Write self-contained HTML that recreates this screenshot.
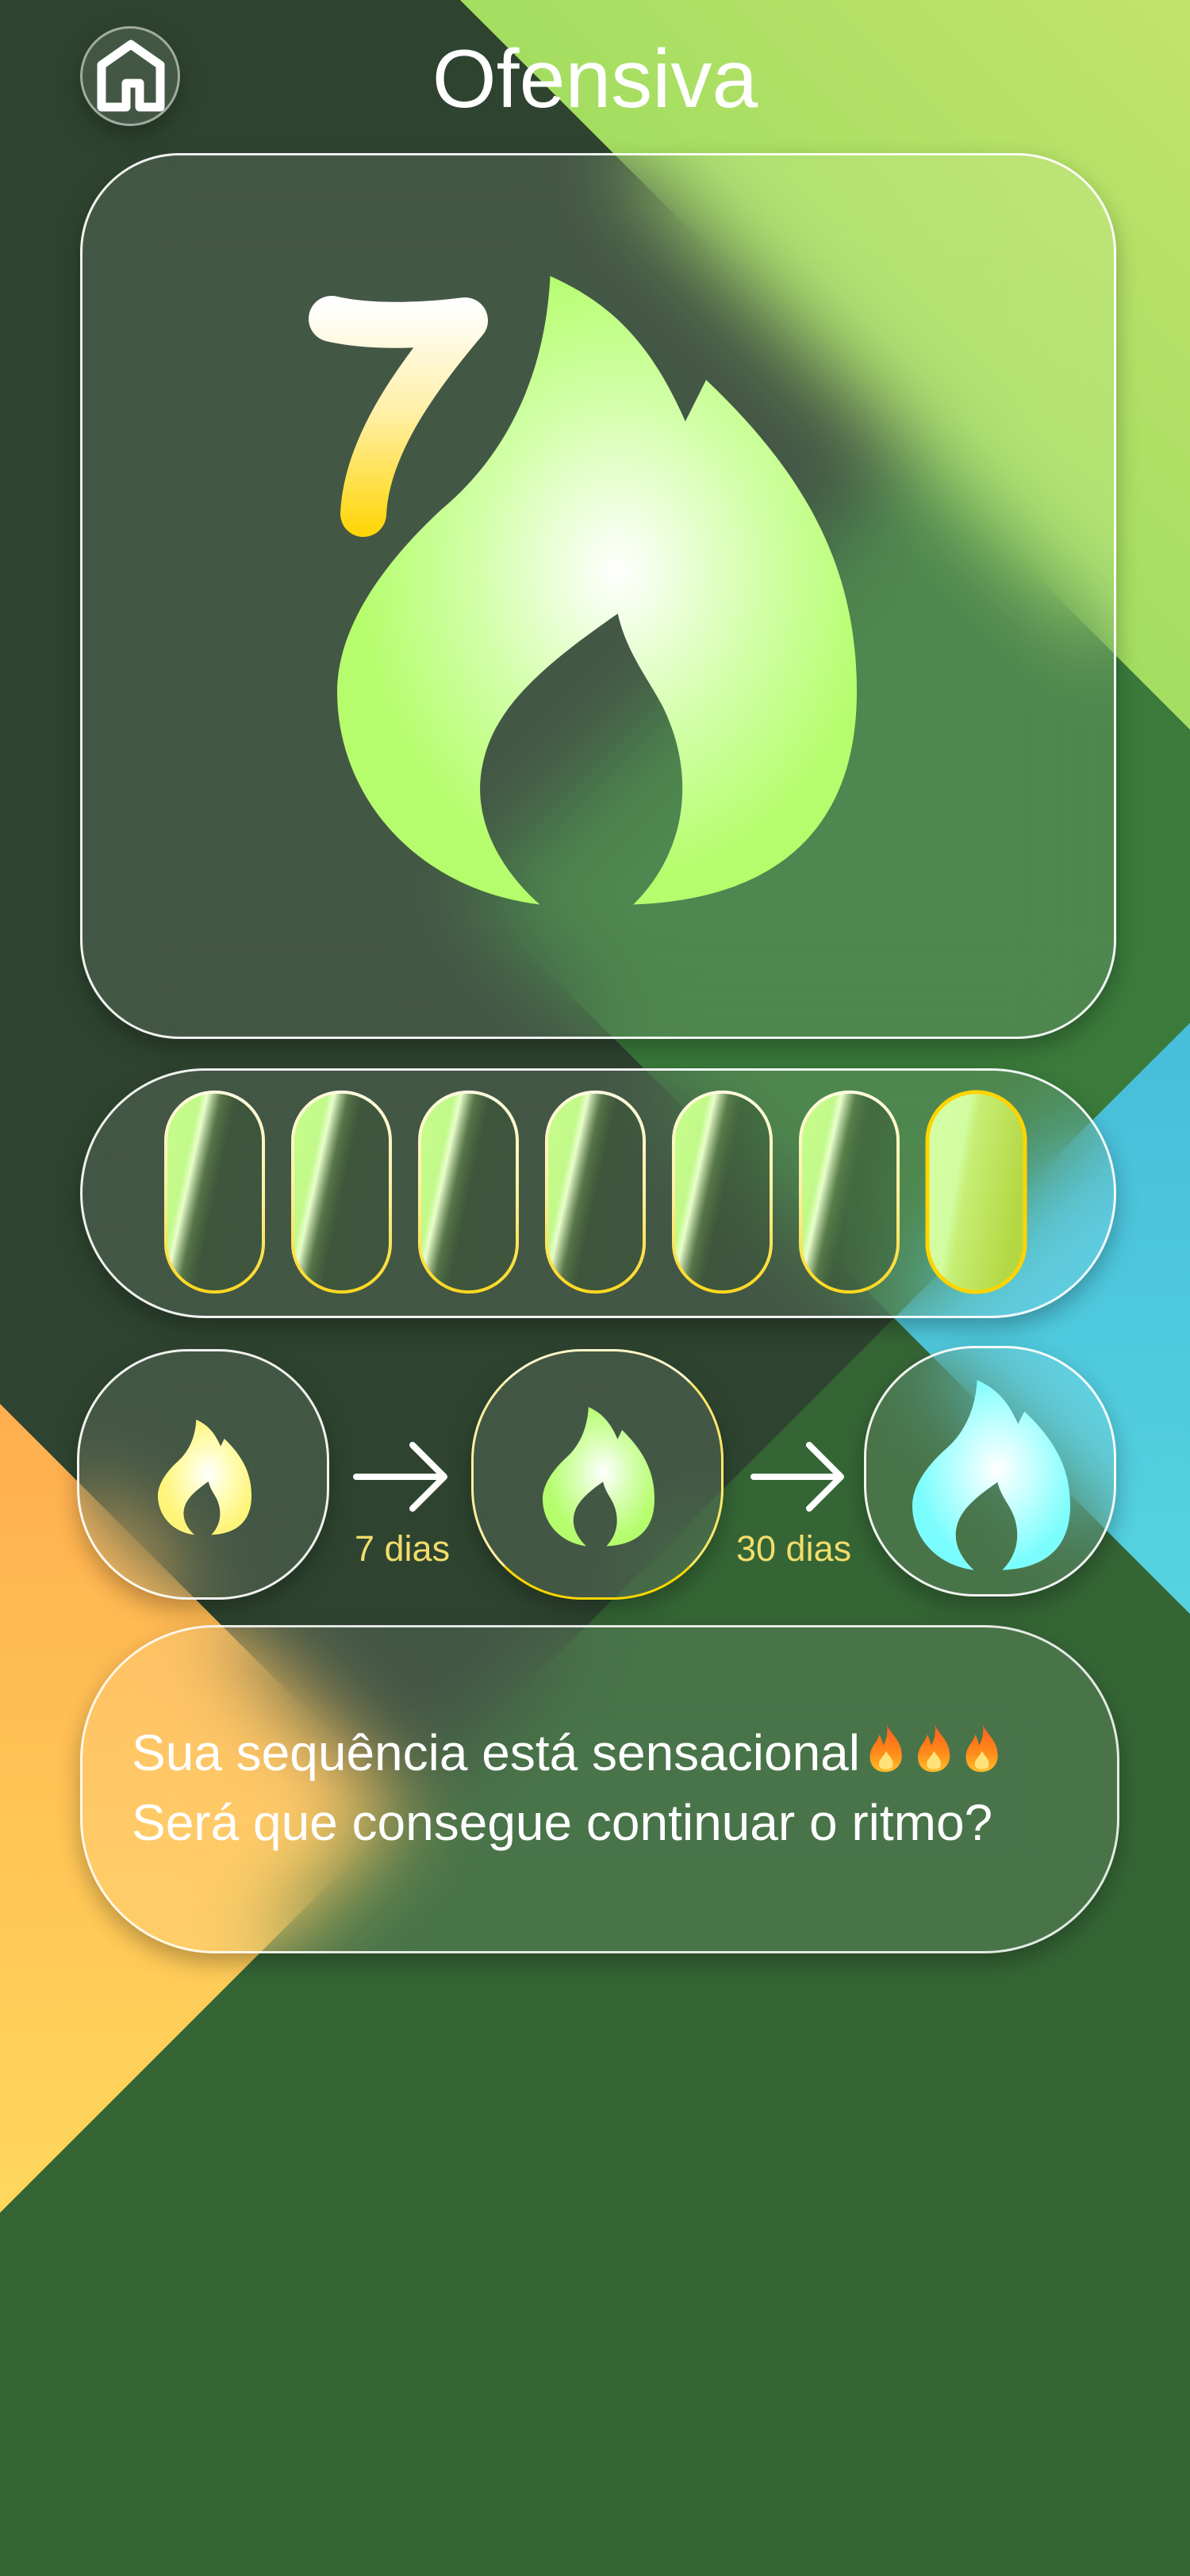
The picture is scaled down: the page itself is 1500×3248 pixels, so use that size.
<!DOCTYPE html>
<html><head><meta charset="utf-8">
<style>
html,body{margin:0;padding:0;}
body{width:1500px;height:3248px;overflow:hidden;position:relative;font-family:"Liberation Sans",sans-serif;background:#356535;}
.bg{position:absolute;left:0;top:0;}
.glass{position:absolute;box-sizing:border-box;border:3px solid rgba(255,255,255,0.92);background:rgba(255,255,255,0.1);backdrop-filter:blur(55px);-webkit-backdrop-filter:blur(55px);box-shadow:0 12px 28px rgba(0,0,0,0.28);}
.abs{position:absolute;}
.title{position:absolute;left:0;width:1500px;text-align:center;top:48px;font-size:104px;color:#fff;line-height:1;}
.lbl{position:absolute;font-size:45px;color:#f2dd6b;line-height:1;}
.msg{position:absolute;left:166px;font-size:64px;color:#fff;line-height:1;white-space:nowrap;}
.msg svg{vertical-align:-6px;}
</style></head><body>
<svg class="bg" width="1500" height="3248" viewBox="0 0 1500 3248">
<defs>
<linearGradient id="lg" x1="0" y1="1" x2="1" y2="0"><stop offset="0" stop-color="#86d957"/><stop offset="1" stop-color="#c2e36b"/></linearGradient>
<linearGradient id="cy" x1="0" y1="0" x2="0" y2="1"><stop offset="0" stop-color="#43b8d8"/><stop offset="1" stop-color="#5fe0e4"/></linearGradient>
<linearGradient id="or" x1="0" y1="0" x2="0" y2="1"><stop offset="0" stop-color="#ffae4f"/><stop offset="1" stop-color="#ffd85c"/></linearGradient>
</defs>
<rect width="1500" height="3248" fill="#356535"/>
<polygon points="1150,570 1685,1105 1127,1662 592,1128" fill="#3a7a3b"/>
<polygon points="1127,1662 1685,1105 2500,1920 1940,2475" fill="url(#cy)"/>
<polygon points="0,0 580,0 1150,570 592,1128 1127,1662 0,2790" fill="#2e4430"/>
<polygon points="580,0 1500,0 1500,920" fill="url(#lg)"/>
<polygon points="0,1770 510,2280 0,2790" fill="url(#or)"/>
</svg>

<!-- home -->
<div class="glass" style="left:101px;top:33px;width:126px;height:126px;border-radius:50%;border-color:rgba(255,255,255,0.5);"></div>
<svg class="abs" style="left:0;top:0" width="260" height="170"><path d="M128,135 L128,82 L165,56 L202,82 L202,135 L176,135 L176,105 L159,105 L159,135 Z" fill="none" stroke="#fff" stroke-width="11" stroke-linejoin="round"/></svg>

<div class="title">Ofensiva</div>

<!-- card 1 -->
<div class="glass" style="left:101px;top:193px;width:1306px;height:1117px;border-radius:125px;"></div>
<svg class="abs" style="left:0;top:0" width="1500" height="1320">
<defs>
<radialGradient id="fg" cx="0.54" cy="0.47" r="0.5"><stop offset="0" stop-color="#ffffff"/><stop offset="0.55" stop-color="#d2ffa8"/><stop offset="1" stop-color="#b5fd6c"/></radialGradient>
<linearGradient id="sv" gradientUnits="userSpaceOnUse" x1="0" y1="385" x2="0" y2="680"><stop offset="0" stop-color="#ffffff"/><stop offset="0.45" stop-color="#fff0a8"/><stop offset="1" stop-color="#ffd400"/></linearGradient>
</defs>
<g transform="translate(425,348) scale(6.55)">
<path d="M41,0 C40,20 32,35 20,45 C6,58 0,70 0,80 C0,100 15,118 39,121 C30,113 26,103 28,94 C30,84 38,76 54,65 C56,74 62,80 64,86 C68,96 68,110 57,121 C85,120 100,106 100,80 C100,56 90,38 71,20 L67,28 C60,12 52,5 41,0 Z" fill="url(#fg)"/>
</g>
<path d="M418,402 C470,414 540,410 586,404 C530,470 462,560 458,648" fill="none" stroke="url(#sv)" stroke-width="58" stroke-linecap="round" stroke-linejoin="round"/>
</svg>

<!-- card 2 pills -->
<div class="glass" style="left:101px;top:1347px;width:1306px;height:315px;border-radius:158px;"></div>
<svg class="abs" style="left:0;top:1340px" width="1500" height="340">
<defs>
<linearGradient id="pf" x1="0" y1="0" x2="1" y2="0.45"><stop offset="0" stop-color="#c6fd8a"/><stop offset="0.3" stop-color="#c2f98a"/><stop offset="0.36" stop-color="#e8ffcc"/><stop offset="0.48" stop-color="#5c7d48" stop-opacity="0.8"/><stop offset="0.62" stop-color="#3a5535" stop-opacity="0.55"/><stop offset="1" stop-color="#3a5535" stop-opacity="0.4"/></linearGradient>
<linearGradient id="pb" x1="0" y1="0" x2="0" y2="1"><stop offset="0" stop-color="#fffbe0"/><stop offset="0.5" stop-color="#fff0a0"/><stop offset="1" stop-color="#ffd81f"/></linearGradient>
<linearGradient id="pl" x1="0" y1="0" x2="1" y2="0.35"><stop offset="0" stop-color="#d6ffa6"/><stop offset="0.4" stop-color="#d2fca0"/><stop offset="0.5" stop-color="#c6ee74"/><stop offset="1" stop-color="#b4d844"/></linearGradient>
</defs>
<g stroke="url(#pb)" stroke-width="4" fill="url(#pf)">
<rect x="209" y="37" width="123" height="252" rx="61"/>
<rect x="369" y="37" width="123" height="252" rx="61"/>
<rect x="529" y="37" width="123" height="252" rx="61"/>
<rect x="689" y="37" width="123" height="252" rx="61"/>
<rect x="849" y="37" width="123" height="252" rx="61"/>
<rect x="1009" y="37" width="123" height="252" rx="61"/>
</g>
<rect x="1169" y="37" width="123" height="252" rx="61" fill="url(#pl)" stroke="#ffd400" stroke-width="5"/>
</svg>

<!-- row 3 -->
<div class="glass" style="left:97px;top:1701px;width:318px;height:316px;border-radius:140px;"></div>
<div class="glass" style="left:594px;top:1701px;width:318px;height:316px;border-radius:140px;border-color:#fff6c8 #ffe86a #ffd700 #fff0a0;"></div>
<div class="glass" style="left:1089px;top:1697px;width:318px;height:316px;border-radius:140px;"></div>
<svg class="abs" style="left:0;top:1690px" width="1500" height="340">
<defs>
<radialGradient id="fy" cx="0.54" cy="0.47" r="0.5"><stop offset="0" stop-color="#ffffff"/><stop offset="0.55" stop-color="#fffcb0"/><stop offset="1" stop-color="#fff47a"/></radialGradient>
<radialGradient id="fc" cx="0.54" cy="0.47" r="0.5"><stop offset="0" stop-color="#ffffff"/><stop offset="0.55" stop-color="#b8ffff"/><stop offset="1" stop-color="#7cfdfd"/></radialGradient>
</defs>
<g transform="translate(199,100) scale(1.18,1.2)"><path d="M41,0 C40,20 32,35 20,45 C6,58 0,70 0,80 C0,100 15,118 39,121 C30,113 26,103 28,94 C30,84 38,76 54,65 C56,74 62,80 64,86 C68,96 68,110 57,121 C85,120 100,106 100,80 C100,56 90,38 71,20 L67,28 C60,12 52,5 41,0 Z" fill="url(#fy)"/></g>
<g transform="translate(684,84) scale(1.41,1.45)"><path d="M41,0 C40,20 32,35 20,45 C6,58 0,70 0,80 C0,100 15,118 39,121 C30,113 26,103 28,94 C30,84 38,76 54,65 C56,74 62,80 64,86 C68,96 68,110 57,121 C85,120 100,106 100,80 C100,56 90,38 71,20 L67,28 C60,12 52,5 41,0 Z" fill="url(#fg)"/></g>
<g transform="translate(1150,50) scale(1.99,1.98)"><path d="M41,0 C40,20 32,35 20,45 C6,58 0,70 0,80 C0,100 15,118 39,121 C30,113 26,103 28,94 C30,84 38,76 54,65 C56,74 62,80 64,86 C68,96 68,110 57,121 C85,120 100,106 100,80 C100,56 90,38 71,20 L67,28 C60,12 52,5 41,0 Z" fill="url(#fc)"/></g>
<g fill="none" stroke="#fff" stroke-width="8" stroke-linecap="round" stroke-linejoin="round">
<path d="M449,172 L560,172 M520,132 L560,172 L520,212"/>
<path d="M950,172 L1060,172 M1020,132 L1060,172 L1020,212"/>
</g>
</svg>
<div class="lbl" style="left:447px;top:1930px;">7 dias</div>
<div class="lbl" style="left:928px;top:1930px;">30 dias</div>

<!-- text card -->
<div class="glass" style="left:101px;top:2049px;width:1310px;height:414px;border-radius:170px;border-color:rgba(255,255,255,0.85);"></div>
<div class="msg" style="top:2170px;">Sua sequência está sensacional<svg width="192" height="68" viewBox="0 0 192 72">
<defs><linearGradient id="em" x1="0" y1="0" x2="0" y2="1"><stop offset="0" stop-color="#ff5a1f"/><stop offset="0.6" stop-color="#ff8a1a"/><stop offset="1" stop-color="#ffc02a"/></linearGradient></defs>
<g id="e1"><path d="M30,4 C34,16 48,24 50,42 C52,58 42,68 28,68 C14,68 6,58 8,44 C10,32 18,28 20,18 C24,24 24,30 26,32 C30,24 32,14 30,4 Z" fill="url(#em)"/><path d="M29,40 C34,48 40,52 38,60 C36,66 22,66 20,60 C18,52 26,48 29,40 Z" fill="#ffe27a"/></g>
<use href="#e1" x="64"/><use href="#e1" x="128"/>
</svg></div>
<div class="msg" style="top:2266px;">Será que consegue continuar o ritmo?</div>
</body></html>
